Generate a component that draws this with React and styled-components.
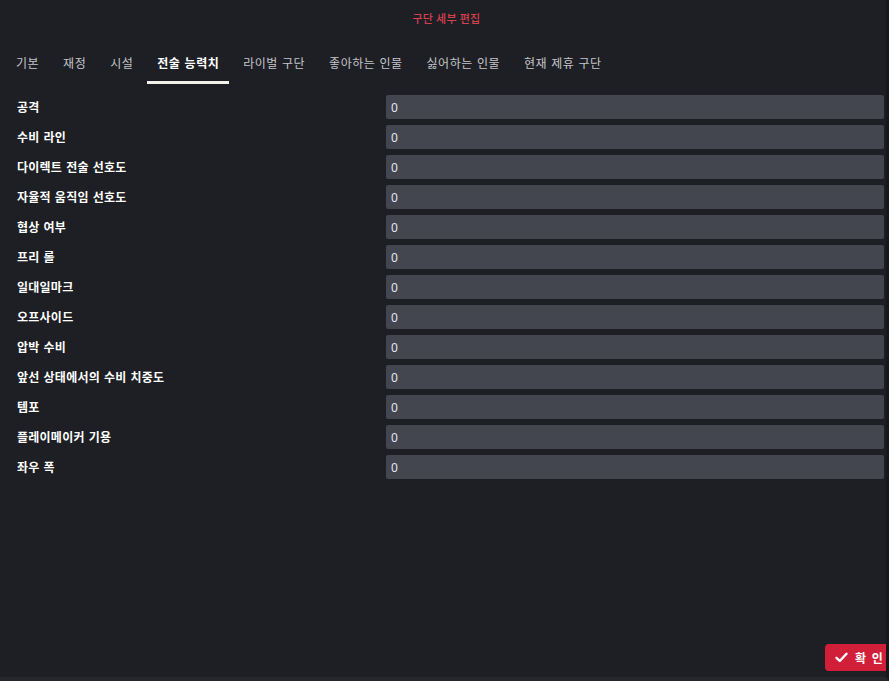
import React, { useState } from 'react'
import styled, { createGlobalStyle } from 'styled-components'

const GlobalStyle = createGlobalStyle`
  html, body {
    margin: 0;
    padding: 0;
    background: #1e1f24;
  }
  body {
    font-family: "Noto Sans CJK KR", "Noto Sans", "Liberation Sans", sans-serif;
  }
`

const tabs = ['기본', '재정', '시설', '전술 능력치', '라이벌 구단', '좋아하는 인물', '싫어하는 인물', '현재 제휴 구단']

const fields = [
  '공격',
  '수비 라인',
  '다이렉트 전술 선호도',
  '자율적 움직임 선호도',
  '협상 여부',
  '프리 롤',
  '일대일마크',
  '오프사이드',
  '압박 수비',
  '앞선 상태에서의 수비 치중도',
  '템포',
  '플레이메이커 기용',
  '좌우 폭',
]

function App() {
  const [active, setActive] = useState(3)
  const [values, setValues] = useState(fields.map(() => '0'))

  return (
    <>
      <GlobalStyle />
      <Page>
        <Title>구단 세부 편집</Title>
        <TabBar>
          {tabs.map((t, i) => (
            <Tab key={t} $active={i === active} onClick={() => setActive(i)}>
              {t}
            </Tab>
          ))}
        </TabBar>
        <Form>
          {fields.map((f, i) => (
            <Row key={f}>
              <Label>{f}</Label>
              <Field
                value={values[i]}
                onChange={(e) => {
                  const next = [...values]
                  next[i] = e.target.value
                  setValues(next)
                }}
              />
            </Row>
          ))}
        </Form>
        <ConfirmButton>
          <svg width="13" height="11" viewBox="0 0 13 11">
            <path d="M1.5 5.8 L4.8 9 L11.5 1.8" fill="none" stroke="#fff" strokeWidth="2.4" strokeLinecap="round" strokeLinejoin="round" />
          </svg>
          <span>확 인</span>
        </ConfirmButton>
      </Page>
    </>
  )
}

const Page = styled.div`
  position: relative;
  height: 100vh;
  box-sizing: border-box;
  background: #1e1f24;
  border-right: 3px solid #17181c;
  border-bottom: 4px solid #26272c;
  overflow: hidden;
`

const Title = styled.div`
  height: 36px;
  display: flex;
  align-items: center;
  justify-content: center;
  color: #d9404f;
  font-size: 11px;
  font-weight: 500;
  letter-spacing: 0.3px;
  padding-left: 7px;
`

const TabBar = styled.div`
  display: flex;
  gap: 4px;
  padding: 14px 0 0 6px;
`

const Tab = styled.div`
  height: 34px;
  padding: 0 10px 7px;
  box-sizing: border-box;
  display: flex;
  align-items: center;
  font-size: 12px;
  letter-spacing: 0.5px;
  word-spacing: 1px;
  font-weight: ${(p) => (p.$active ? 700 : 400)};
  color: ${(p) => (p.$active ? '#ffffff' : '#c4c5ca')};
  border-bottom: 3px solid ${(p) => (p.$active ? '#f4f1ea' : 'transparent')};
  cursor: pointer;
`

const Form = styled.div`
  display: flex;
  flex-direction: column;
  gap: 6px;
  padding: 11px 2px 0 17px;
`

const Row = styled.div`
  display: grid;
  grid-template-columns: 369px 1fr;
  align-items: center;
`

const Label = styled.div`
  color: #ffffff;
  font-size: 12px;
  font-weight: 700;
  letter-spacing: 0.25px;
  word-spacing: 1px;
  margin-top: -2px;
`

const Field = styled.input`
  height: 24px;
  box-sizing: border-box;
  border: none;
  border-radius: 2px;
  background: #44464f;
  color: #e2e6f2;
  font-family: "Noto Sans", "Liberation Sans", sans-serif;
  font-size: 12px;
  padding: 0 5px;
  outline: none;
`

const ConfirmButton = styled.button`
  position: absolute;
  right: -7px;
  bottom: 6px;
  height: 27px;
  width: 68px;
  border: none;
  border-radius: 4px;
  background: #d21f39;
  color: #ffffff;
  display: flex;
  align-items: center;
  gap: 7px;
  padding: 0 0 0 10px;
  font-family: "Noto Sans CJK KR", "Noto Sans", sans-serif;
  font-size: 12px;
  font-weight: 700;
  word-spacing: 3px;
  cursor: pointer;
`

export default App
